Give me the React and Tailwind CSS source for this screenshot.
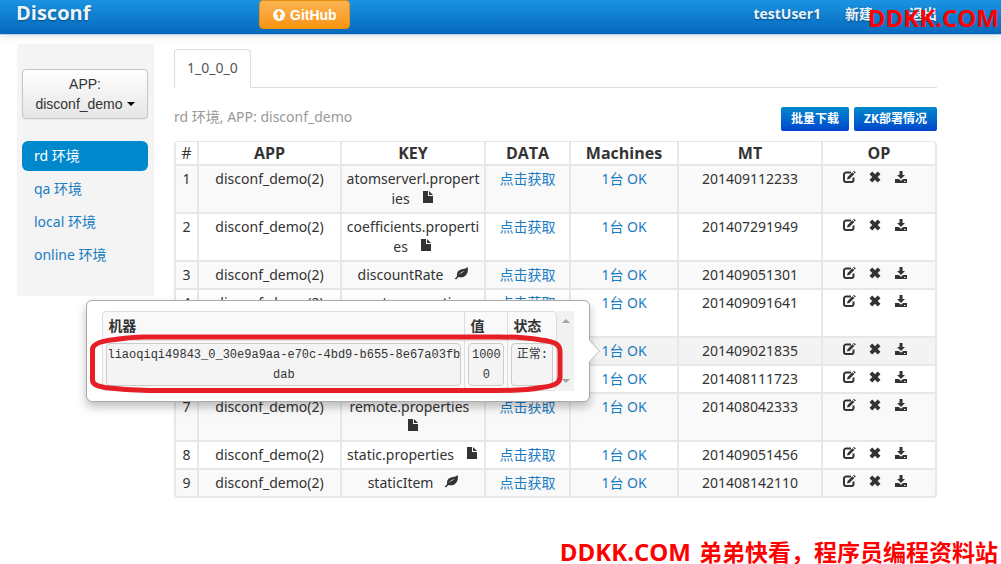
const icons = {
  file: <path d="M2 1h5v5h5v7H2z M8 1l4 4H8z" />,
  leaf: <path d="M13.6 1c.7 3.200.2 6.400-2 8.500-1.900 1.900-4.600 2.200-7.200 1.500L2.300 13.200 0.600 13l2.600-2.900C2.300 6.900 4 4.400 7 3.500 9.700 2.700 12 3 13.600 1zM10.800 5C8.300 5.400 6 6.800 4.200 9.300 6.300 7.600 8.400 6.500 10.800 5z" fillRule="evenodd" />,
  edit: (
    <>
      <path d="M9 2.500H4A2 2 0 0 0 2 4.500V10a2 2 0 0 0 2 2h5.500a2 2 0 0 0 2-2V7.500" fill="none" stroke="currentColor" strokeWidth="2" />
      <path d="M5 9.500l.6-2.500 4.900-4.800 1.800 1.800-4.900 4.900zM11.200 1.600l.8-.8 1.800 1.700-.9.900z" />
    </>
  ),
  remove: <path d="M4.200 1.500L7 4.300 9.800 1.500 12.500 4.200 9.700 7 12.500 9.800 9.800 12.500 7 9.700 4.200 12.500 1.500 9.800 4.300 7 1.500 4.200z" />,
  download: <path d="M5.500 1h3v4H11L7 9 3 5h2.500zM1 9h3.800L7 10.800 9.200 9H13v4H1zM10 11v1h1.500v-1z" fillRule="evenodd" />,
};

function Icon({ name, className = "" }) {
  return (
    <svg viewBox="0 0 14 14" fill="currentColor" aria-hidden="true" className={`size-3.5 ${className}`}>
      {icons[name]}
    </svg>
  );
}

const rows = [
  { key: "atomserverl.properties", kind: "file", time: "201409112233" },
  { key: "coefficients.properties", kind: "file", time: "201407291949" },
  { key: "discountRate", kind: "leaf", time: "201409051301" },
  { key: "empty.properties", kind: "file", time: "201409091641", tall: true },
  { key: "moneyInvest", kind: "leaf", time: "201409021835", open: true },
  { key: "moneyRate", kind: "leaf", time: "201408111723" },
  { key: "remote.properties", kind: "file", time: "201408042333" },
  { key: "static.properties", kind: "file", time: "201409051456" },
  { key: "staticItem", kind: "leaf", time: "201408142110" },
];

const columns = [
  ["#", "w-[23px] rounded-tl"],
  ["APP", "w-[143px]"],
  ["KEY", "w-[144px]"],
  ["DATA", "w-[85px]"],
  ["Machines", "w-[108px]"],
  ["MT", "w-[144px]"],
  ["OP", "w-[116px] rounded-tr border-r-2"],
];

const environments = ["rd 环境", "qa 环境", "local 环境", "online 环境"];

const cell = "border-b-2 border-l-2 border-[#e7e7e7] py-[3px] align-top";
const code = "block h-[43px] rounded border border-[#ccc] bg-[#f4f4f4] pt-px text-center break-all";

function MachinePopover() {
  return (
    <div className="absolute top-1/2 right-full z-10 mr-[11px] w-[504px] -translate-y-1/2 rounded-md border border-[#aaa] bg-white px-[15px] py-[10px] text-left text-[#333] shadow-[0_5px_10px_rgba(0,0,0,0.25)]">
      <div className="flex h-20">
        <table className="flex-1 table-fixed border-separate border-spacing-0 rounded border border-[#ddd] bg-[#f9f9f9]">
          <thead>
            <tr className="h-7">
              <th className="w-[361px] px-[5px] text-left">机器</th>
              <th className="w-[43px] border-l border-[#ddd] px-[5px] text-left">值</th>
              <th className="border-l border-[#ddd] px-[5px] text-left">状态</th>
            </tr>
          </thead>
          <tbody className="font-['Liberation_Mono','Noto_Sans_CJK_SC',monospace] text-xs leading-5">
            <tr>
              <td className="border-t border-[#ddd] px-[3px] pt-0.5 align-top">
                <code className={code + " font-[inherit]"}>liaoqiqi49843_0_30e9a9aa-e70c-4bd9-b655-8e67a03fbdab</code>
              </td>
              <td className="border-t border-l border-[#ddd] px-[3px] pt-0.5 align-top">
                <code className={code + " font-[inherit]"}>10000</code>
              </td>
              <td className="border-t border-l border-[#ddd] px-[3px] pt-0.5 align-top">
                <code className={code + " font-[inherit]"}>正常:</code>
              </td>
            </tr>
          </tbody>
        </table>
        <div className="flex w-[17px] flex-col items-center justify-between bg-[#f1f1f1] py-2 text-[#a3a3a3]">
          <svg viewBox="0 0 8 4" className="h-1 w-2" fill="currentColor"><path d="M0 4l4-4 4 4z" /></svg>
          <svg viewBox="0 0 8 4" className="h-1 w-2" fill="currentColor"><path d="M0 0l4 4 4-4z" /></svg>
        </div>
      </div>
      <svg viewBox="0 0 11 22" className="absolute top-1/2 left-full h-[22px] w-[11px] -translate-y-1/2">
        <path d="M0 0l10.500 11L0 22z" fill="#fff" />
        <path d="M.5 .5l10 10.500-10 10.500" fill="none" stroke="#bbb" />
      </svg>
      <svg viewBox="0 0 476 60" className="absolute top-[33px] left-0.5 h-[60px] w-[476px]" fill="none" stroke="#e61e25" strokeWidth="5">
        <path d="M55 3H410C432 3 440 4 452 6 468 8 471 11 471 18V43C471 49 466 52 452 53.500 440 56 425 56.500 410 56.500H60C40 56 28 55 16 53.500 7 52 3.500 50 3.500 46V15C4 10 12 7 26 5.500 36 4 44 3 55 3z" />
      </svg>
    </div>
  );
}

export default function App() {
  return (
    <div className="relative min-h-screen bg-white font-['Noto_Sans','Noto_Sans_CJK_SC',sans-serif] text-sm leading-5 text-[#333]">
      <header className="flex h-[35px] items-start border-b border-[#b5cfe8] bg-linear-to-b from-[#1b93e2] to-[#0569bd] pr-16 pl-4 font-['Open_Sans','Noto_Sans_CJK_SC',sans-serif] font-bold text-[#eaf4fc] shadow-[0_1px_8px_rgba(0,0,0,0.12)] [text-shadow:0_1px_2px_rgba(0,0,0,0.4)]">
        <a href="#home" className="w-[243px] text-xl leading-[26px]">Disconf</a>
        <button type="button" className="flex h-[29px] items-center gap-1 rounded border border-[#e8910f] bg-linear-to-b from-[#fbb450] to-[#f89406] px-3 font-['Liberation_Sans',sans-serif] text-sm text-white">
          <svg viewBox="0 0 14 14" className="size-3.5" aria-hidden="true">
            <circle cx="7" cy="7" r="6" fill="#fff" />
            <path d="M7 2.500l3.500 4H8.200v4H5.800v-4H3.500z" fill="#f9a32c" />
          </svg>
          GitHub
        </button>
        <nav className="ml-auto flex leading-7">
          <a href="#user">testUser1</a>
          <a href="#new" className="ml-6">新建</a>
          <a href="#logout" className="ml-9">退出</a>
        </nav>
      </header>

      <div className="flex items-start gap-5 pt-[9px] pr-16 pl-[17px]">
        <aside className="w-[137px] shrink-0 bg-[#f4f4f4] pt-[25px] pr-1.5 pb-[26px] pl-[5px]">
          <button type="button" className="w-full rounded border border-[#c5c5c5] bg-linear-to-b from-white to-[#e6e6e6] py-1 font-['Liberation_Sans',sans-serif] text-sm leading-5 shadow-[0_1px_2px_rgba(0,0,0,0.05)]">
            APP:
            <span className="flex items-center justify-center gap-1">
              disconf_demo
              <svg viewBox="0 0 8 4" className="h-1 w-2" aria-hidden="true"><path d="M0 0h8L4 4z" /></svg>
            </span>
          </button>
          <nav className="mt-[22px] flex flex-col gap-[3px]">
            {environments.map((name, i) => (
              <a key={name} href="#env" className={i === 0 ? "rounded-md bg-[#0088cc] px-3 py-[5px] text-white" : "px-3 py-[5px] text-[#1a7cc2]"}>
                {name}
              </a>
            ))}
          </nav>
        </aside>

        <main className="min-w-0 flex-1 pt-[5px]">
          <div className="flex border-b border-[#ddd]">
            <a href="#version" className="-mb-px rounded-t border border-b-0 border-[#ddd] bg-white px-3 pt-2 pb-[10px] text-[#555]">1_0_0_0</a>
          </div>
          <div className="mt-[19px] mb-[10px] flex items-start justify-between">
            <p className="text-[#999]">rd 环境, APP: disconf_demo</p>
            <div className="flex gap-[5px] text-xs font-bold text-white [text-shadow:0_-1px_0_rgba(0,0,0,0.25)]">
              <button type="button" className="h-6 rounded-xs bg-linear-to-b from-[#0088cc] to-[#0044cc] px-[10px]">批量下载</button>
              <button type="button" className="h-6 rounded-xs bg-linear-to-b from-[#0088cc] to-[#0044cc] px-[10px]">ZK部署情况</button>
            </div>
          </div>

          <table className="w-full table-fixed border-separate border-spacing-0 text-center">
            <thead>
              <tr>
                {columns.map(([label, size]) => (
                  <th key={label} className={`${size} border-t border-b-2 border-l-2 border-[#e7e7e7] py-px font-['Open_Sans',sans-serif] text-base leading-5 ${label === "#" ? "font-medium" : "font-bold"}`}>
                    {label}
                  </th>
                ))}
              </tr>
            </thead>
            <tbody>
              {rows.map((row, i) => (
                <tr key={row.key} className={row.open ? "bg-[#f3f3f3]" : "odd:bg-[#f9f9f9]"}>
                  <td className={i === rows.length - 1 ? cell + " rounded-bl" : cell}>{i + 1}</td>
                  <td className={cell}>disconf_demo(2)</td>
                  <td className={row.tall ? cell + " h-12 px-[3px] break-all" : cell + " px-[3px] break-all"}>
                    {row.key + "\u00a0\u00a0 "}
                    <Icon name={row.kind} className="inline-block align-baseline" />
                  </td>
                  <td className={cell}><a href="#data" className="text-[#1a7cc2]">点击获取</a></td>
                  <td className={cell}>
                    <span className="relative inline-block">
                      <a href="#machines" className="text-[#1a7cc2]">1台 OK</a>
                      {row.open && <MachinePopover />}
                    </span>
                  </td>
                  <td className={cell}>{row.time}</td>
                  <td className={i === rows.length - 1 ? cell + " rounded-br border-r-2" : cell + " border-r-2"}>
                    <div className="flex h-5 justify-center gap-3 pt-px pr-2">
                      <button type="button" aria-label="Edit" className="h-3.5"><Icon name="edit" /></button>
                      <button type="button" aria-label="Delete" className="h-3.5"><Icon name="remove" /></button>
                      <button type="button" aria-label="Download" className="h-3.5"><Icon name="download" /></button>
                    </div>
                  </td>
                </tr>
              ))}
            </tbody>
          </table>
        </main>
      </div>

      <div className="absolute top-0 right-0.5 z-20 font-['Open_Sans',sans-serif] text-2xl leading-9 font-bold text-[#f00]">DDKK.COM</div>
      <div className="absolute right-[3px] bottom-0 z-20 flex items-baseline gap-2 font-['Open_Sans','Noto_Sans_CJK_SC',sans-serif] text-[23px] leading-6 font-bold text-[#f00]">
        <span className="text-2xl leading-6">DDKK.COM</span>
        <span>弟弟快看，程序员编程资料站</span>
      </div>
    </div>
  );
}
